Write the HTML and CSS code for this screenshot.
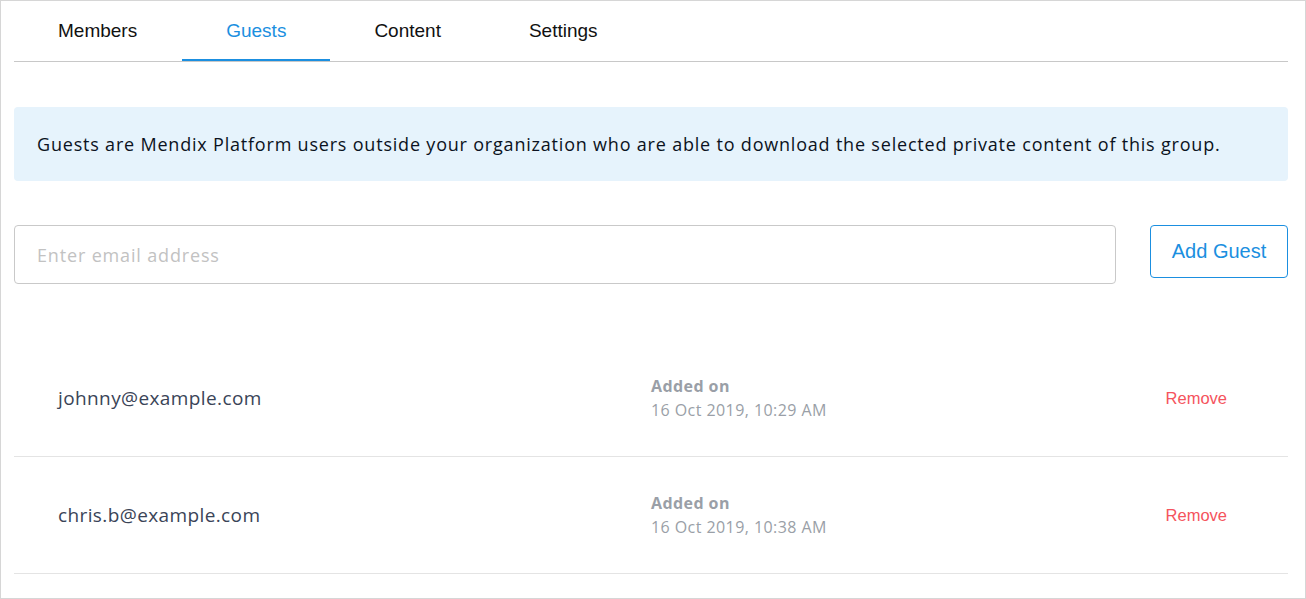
FILE: index.html
```html
<!DOCTYPE html>
<html lang="en">
<head>
<meta charset="utf-8">
<title>Guests</title>
<link rel="stylesheet" href="styles.css">
</head>
<body>
<div class="page">
  <nav class="tabs">
    <a class="tab">Members</a>
    <a class="tab active">Guests</a>
    <a class="tab">Content</a>
    <a class="tab">Settings</a>
  </nav>
  <div class="info">Guests are Mendix Platform users outside your organization who are able to download the selected private content of this group.</div>
  <form class="add-form">
    <input class="email-input" type="text" placeholder="Enter email address">
    <button class="add-btn" type="button">Add Guest</button>
  </form>
  <ul class="guests">
    <li class="guest">
      <span class="guest-email">johnny@example.com</span>
      <div class="guest-date">
        <div class="date-label">Added on</div>
        <div class="date-value">16 Oct 2019, 10:29 AM</div>
      </div>
      <a class="remove">Remove</a>
    </li>
    <li class="guest">
      <span class="guest-email">chris.b@example.com</span>
      <div class="guest-date">
        <div class="date-label">Added on</div>
        <div class="date-value">16 Oct 2019, 10:38 AM</div>
      </div>
      <a class="remove">Remove</a>
    </li>
  </ul>
</div>
</body>
</html>
```

FILE: styles.css
```css
* { box-sizing: border-box; }
html, body { margin: 0; padding: 0; background: #fff; }
.page {
  width: 1306px;
  height: 599px;
  border: 1px solid #d6d6d6;
  padding: 0 17px 0 13px;
  overflow: hidden;
  font-family: "Open Sans", sans-serif;
}
.tabs {
  display: flex;
  border-bottom: 1px solid #c8c8c8;
}
.tab {
  font-family: "Liberation Sans", Arial, sans-serif;
  font-size: 19px;
  color: #111;
  padding: 2px 44px 0;
  height: 60px;
  line-height: 56px;
  border-bottom: 2px solid transparent;
  cursor: pointer;
}
.tab:first-child { padding-right: 45px; }
.tab.active {
  color: #1b8fe0;
  border-bottom-color: #1b8fe0;
}
.info {
  margin-top: 45px;
  height: 74px;
  background: #e6f3fc;
  border-radius: 4px;
  padding: 0 23px;
  display: flex;
  align-items: center;
  font-size: 18px;
  letter-spacing: 0.8px;
  color: #0b1221;
}
.add-form {
  margin: 44px 0 0;
  display: flex;
  align-items: flex-start;
  gap: 34px;
}
.email-input {
  flex: 1;
  height: 59px;
  border: 1px solid #c9c9c9;
  border-radius: 4px;
  padding: 0 22px;
  font-family: "Open Sans", sans-serif;
  font-size: 18px;
  letter-spacing: 0.84px;
  color: #333;
  outline: none;
}
.email-input::placeholder { color: #c2c2c2; }
.add-btn {
  width: 138px;
  height: 53px;
  background: #fff;
  border: 1px solid #1b8fe0;
  border-radius: 4px;
  color: #1b8fe0;
  font-family: "Liberation Sans", Arial, sans-serif;
  font-size: 20px;
  padding: 0;
  cursor: pointer;
}
.guests {
  list-style: none;
  margin: 56px 0 0;
  padding: 0;
}
.guest {
  display: grid;
  grid-template-columns: 593px 1fr auto;
  align-items: center;
  height: 117px;
  padding: 0 61px 0 44px;
  border-bottom: 1px solid #e4e4e4;
}
.guest-email {
  font-size: 19px;
  letter-spacing: 0.39px;
  color: #3a4457;
}
.guest-date {
  font-size: 16px;
  line-height: 24px;
  letter-spacing: 0.43px;
  color: #9a9fa7;
}
.date-label { font-weight: 700; }
.remove {
  font-family: "Liberation Sans", Arial, sans-serif;
  font-size: 16.5px;
  color: #f5535d;
  cursor: pointer;
}
```
